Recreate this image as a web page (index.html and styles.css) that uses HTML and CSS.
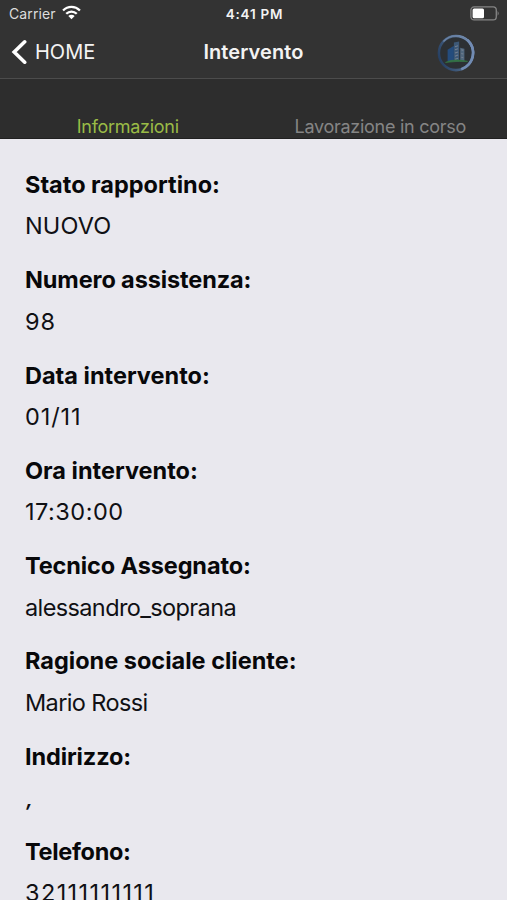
FILE: index.html
```html
<!DOCTYPE html>
<html lang="it">
<head>
<meta charset="utf-8">
<meta name="viewport" content="width=device-width, initial-scale=1">
<title>Intervento</title>
<link rel="stylesheet" href="styles.css">
</head>
<body>
<header class="header">
  <div class="status">
    <div class="carrier"><span class="carrier-name">Carrier</span>
      <svg class="wifi" viewBox="0 0 18 14" width="19" height="14.8"><g fill="none" stroke="#fff" stroke-width="2.2"><path d="M1 5.2C5.6.7 12.400.7 17 5.200"/><path d="M4 8.300c2.900-2.800 7.100-2.800 10 0"/></g><path d="M6 10.500c1.700-1.600 4.300-1.600 6 0l-3 3z" fill="#fff"/></svg>
    </div>
    <div class="time"><span>4:41 PM</span></div>
    <svg class="battery" viewBox="0 0 30 15" width="30" height="15"><rect x=".9" y=".9" width="25.400" height="13" rx="3.200" fill="none" stroke="#858585" stroke-width="1.300"/><rect x="2.600" y="2.600" width="11.400" height="9.600" rx="1.500" fill="#fff"/><path d="M27.600 5q2.200 2.400 0 4.800z" fill="#858585"/></svg>
  </div>
  <nav class="nav">
    <a class="back"><svg class="chevron" viewBox="0 0 16 26" width="16" height="26"><path d="M13.700 2.800 3.200 13l10.500 10.200" fill="none" stroke="#fff" stroke-width="3.600" stroke-linecap="round"/></svg><span class="back-text">HOME</span></a>
    <h1 class="title"><span>Intervento</span></h1>
    <svg class="logo" viewBox="0 0 40 38" width="42" height="40">
      <defs><linearGradient id="ring" x1="0" y1=".7" x2="1" y2=".3"><stop offset="0" stop-color="#253e61"/><stop offset=".5" stop-color="#4b6585"/><stop offset="1" stop-color="#84a2cf"/></linearGradient></defs>
      <circle cx="20" cy="19" r="16.300" fill="#2c3034" stroke="url(#ring)" stroke-width="2.400"/>
      <path d="M8 8a16.300 16.300 0 0 1 27 5" fill="none" stroke="#6b83a5" stroke-width="1.500"/>
      <path d="M31 6.500a16.700 16.700 0 0 1-6 28" fill="none" stroke="#718bb3" stroke-width="2.400"/>
      <path d="M12 27V16l6-4v15z" fill="#244c7d"/>
      <path d="M18 27V9l5-1v19z" fill="#3d5876"/>
      <path d="M24 27V14l4 1v12z" fill="#50677d"/>
      <path d="m19 13 3-1m-3 4 3-1m-3 4 3-1m-3 4 3-1m-3 4 3-1m3-8 2 .500m-2 3 2 .500m-2 3 2 .500" stroke="#737f90" stroke-width="1"/>
      <path d="M10 28q8-4 21-1-9-.500-21 1z" fill="#347443" stroke="#347443" stroke-width=".7"/>
    </svg>
  </nav>
  <div class="tabs"><a class="tab active"><span>Informazioni</span></a><a class="tab other"><span>Lavorazione in corso</span></a></div>
</header>
<main>
  <dl class="details">
    <div class="item"><dt><span>Stato rapportino:</span></dt><dd><span>NUOVO</span></dd></div>
    <div class="item"><dt class="compact"><span>Numero assistenza:</span></dt><dd class="number"><span>98</span></dd></div>
    <div class="item"><dt><span>Data intervento:</span></dt><dd class="number"><span>01/11</span></dd></div>
    <div class="item"><dt><span>Ora intervento:</span></dt><dd class="clock"><span>17:30:00</span></dd></div>
    <div class="item"><dt class="compact"><span>Tecnico Assegnato:</span></dt><dd class="name"><span>alessandro_soprana</span></dd></div>
    <div class="item"><dt><span>Ragione sociale cliente:</span></dt><dd class="name"><span>Mario Rossi</span></dd></div>
    <div class="item"><dt class="compact"><span>Indirizzo:</span></dt><dd class="address"><span>,</span></dd></div>
    <div class="item"><dt class="tight"><span>Telefono:</span></dt><dd class="phone"><span>32111111111</span></dd></div>
  </dl>
</main>
</body>
</html>
```
FILE: styles.css
```css
* { box-sizing: border-box; }
body {
  margin: 0;
  height: 900px;
  overflow: hidden;
  background: #e9e8ee;
  color: #101014;
  font-family: Inter, "Liberation Sans", sans-serif;
}
.header { height: 139px; background: #2d2d2d; color: #f3f3f3; border-bottom: 1px solid #202020; }
.status, .nav { display: grid; grid-template-columns: 1fr 1fr 1fr; align-items: center; background: #333; }
.status { height: 27px; padding: 0 7px 0 9px; }
.carrier { display: flex; align-items: center; gap: 6px; height: 27px; font-size: 14px; letter-spacing: .1px; color: #ddd; }
.wifi { margin-bottom: 2px; }
.time { text-align: center; font-size: 13.5px; font-weight: 600; letter-spacing: .8px; }
.battery, .logo { justify-self: end; }
.nav { height: 52px; padding: 0 11px 1px; border-bottom: 1px solid #4c4c4c; grid-template-columns: 1fr 120px 1fr; }
.logo { margin: 2px 19px 0 0; }
.back { display: flex; align-items: center; gap: 8px; font-size: 20px; }
.title { margin: 0; text-align: center; font-size: 20px; font-weight: 600; letter-spacing: .1px; white-space: nowrap; }
.tabs { display: grid; grid-template-columns: 1fr 1fr; height: 59px; padding-top: 37px; font-size: 18px; line-height: 22px; text-align: center; letter-spacing: -.28px; }
.active { color: #9abb46; padding-left: 2px; }
.other { color: #858585; }
.details { margin: 0; padding: 25px 25px 0; font-size: 23.5px; line-height: 41.4px; }
.item { height: 95.3px; }
dt { font-weight: 700; color: #08080a; letter-spacing: 0; }
dd { margin: 0; letter-spacing: .1px; }
.compact { letter-spacing: -.12px; }
.tight { letter-spacing: -.3px; }
.number { letter-spacing: .9px; }
.clock { letter-spacing: .5px; }
.name { letter-spacing: -.62px; }
.phone { letter-spacing: 1.4px; }
.address { padding-left: 1.5px; font-size: 19px; font-style: italic; font-weight: 700; line-height: 45px; }
```
